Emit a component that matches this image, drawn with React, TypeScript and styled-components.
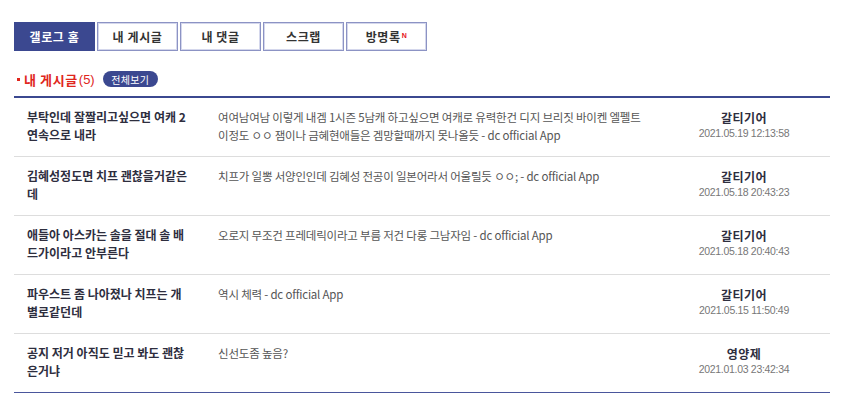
import styled, { createGlobalStyle } from "styled-components";

const GlobalStyle = createGlobalStyle`
  body {
    margin: 0;
    background: #ffffff;
    font-family: "Noto Sans CJK KR", "Noto Sans", sans-serif;
    color: #333;
  }
`;

const tabs = [
  { label: "갤로그 홈", active: true },
  { label: "내 게시글" },
  { label: "내 댓글" },
  { label: "스크랩" },
  { label: "방명록", isNew: true },
];

const posts = [
  {
    title: "부탁인데 잘짤리고싶으면 여캐 2 연속으로 내라",
    body: "여여남여남 이렇게 내겜 1시즌 5남캐 하고싶으면 여캐로 유력한건 디지 브리짓 바이켄 엘펠트 이정도 ㅇㅇ 잼이나 금혜현애들은 겜망할때까지 못나올듯 - dc official App",
    nick: "갈티기어",
    date: "2021.05.19 12:13:58",
  },
  {
    title: "김혜성정도면 치프 괜찮을거같은데",
    body: "치프가 일뽕 서양인인데 김혜성 전공이 일본어라서 어울릴듯 ㅇㅇ; - dc official App",
    nick: "갈티기어",
    date: "2021.05.18 20:43:23",
  },
  {
    title: "애들아 아스카는 솔을 절대 솔 배드가이라고 안부른다",
    body: "오로지 무조건 프레데릭이라고 부름 저건 다롱 그남자임 - dc official App",
    nick: "갈티기어",
    date: "2021.05.18 20:40:43",
  },
  {
    title: "파우스트 좀 나아졌나 치프는 개별로같던데",
    body: "역시 체력 - dc official App",
    nick: "갈티기어",
    date: "2021.05.15 11:50:49",
  },
  {
    title: "공지 저거 아직도 믿고 봐도 괜찮은거냐",
    body: "신선도좀 높음?",
    nick: "영양제",
    date: "2021.01.03 23:42:34",
  },
];

export default function App() {
  return (
    <>
      <GlobalStyle />
      <Page>
        <TabBar>
          {tabs.map((t) => (
            <Tab key={t.label} $active={!!t.active}>
              {t.label}
              {t.isNew && <NewMark>N</NewMark>}
            </Tab>
          ))}
        </TabBar>

        <SectionHead>
          <SectionTitle>
            <Dot />
            <strong>내 게시글</strong>
            <Count>(5)</Count>
          </SectionTitle>
          <MoreButton>전체보기</MoreButton>
        </SectionHead>

        <PostList>
          {posts.map((p, i) => (
            <PostRow key={i}>
              <PostTitle>{p.title}</PostTitle>
              <PostBody>{p.body}</PostBody>
              <PostMeta>
                <Nick>{p.nick}</Nick>
                <DateText>{p.date}</DateText>
              </PostMeta>
            </PostRow>
          ))}
        </PostList>
      </Page>
    </>
  );
}

const Page = styled.div`
  width: 816px;
  padding: 22px 0 0 14px;
`;

const TabBar = styled.div`
  display: flex;
  gap: 2px;
`;

const Tab = styled.div<{ $active: boolean }>`
  width: 81px;
  height: 29px;
  box-sizing: border-box;
  display: flex;
  align-items: center;
  justify-content: center;
  font-size: 12px;
  font-weight: 700;
  letter-spacing: 0.6px;
  color: ${(p) => (p.$active ? "#ffffff" : "#333")};
  background: ${(p) => (p.$active ? "#3b4890" : "#ffffff")};
  border: 1px solid ${(p) => (p.$active ? "#3b4890" : "#8c93c4")};
  box-shadow: ${(p) => (p.$active ? "none" : "inset 0 0 0 1px #d4d7ec")};
  cursor: pointer;
`;

const NewMark = styled.sup`
  font-family: "Liberation Sans", sans-serif;
  font-size: 7px;
  font-weight: 700;
  color: #e5101a;
  margin-left: 1px;
  position: relative;
  top: -1px;
`;

const SectionHead = styled.div`
  display: flex;
  align-items: center;
  gap: 8px;
  height: 16px;
  margin-top: 20px;
  margin-bottom: 9px;
`;

const SectionTitle = styled.div`
  display: flex;
  align-items: center;
  font-size: 13px;
  color: #e0261c;
  padding-left: 3px;
  strong {
    font-weight: 700;
    letter-spacing: 0.6px;
  }
`;

const Dot = styled.span`
  width: 3px;
  height: 3px;
  background: #e0261c;
  margin-right: 4px;
`;

const Count = styled.span`
  font-family: "Liberation Sans", sans-serif;
  font-size: 13px;
  margin-left: 1px;
`;

const MoreButton = styled.span`
  width: 55px;
  height: 16px;
  border-radius: 8px;
  background: #3b4890;
  color: #ffffff;
  font-size: 10px;
  display: flex;
  align-items: center;
  justify-content: center;
  letter-spacing: 0.3px;
`;

const PostList = styled.div`
  border-top: 2px solid #3b4890;
  border-bottom: 1px solid #4a569c;
`;

const PostRow = styled.div`
  display: grid;
  grid-template-columns: 204px 440px 172px;
  height: 59px;
  box-sizing: border-box;
  padding-top: 10px;
  border-top: 1px solid #dddddd;
  &:first-child {
    height: 58px;
    border-top: none;
  }
`;

const PostTitle = styled.div`
  padding-left: 13px;
  width: 163px;
  font-size: 12px;
  font-weight: 700;
  line-height: 18px;
  color: #2e2e3e;
`;

const PostBody = styled.div`
  font-size: 11.5px;
  line-height: 18px;
  color: #555;
  padding-right: 8px;
  letter-spacing: -0.2px;
`;

const PostMeta = styled.div`
  display: flex;
  flex-direction: column;
  align-items: center;
  padding-top: 2px;
`;

const Nick = styled.div`
  font-size: 12px;
  font-weight: 700;
  line-height: 16px;
  color: #2e2e3e;
  letter-spacing: 0.5px;
`;

const DateText = styled.div`
  font-family: "Liberation Sans", sans-serif;
  font-size: 10.5px;
  line-height: 14px;
  color: #777;
  letter-spacing: -0.3px;
`;
